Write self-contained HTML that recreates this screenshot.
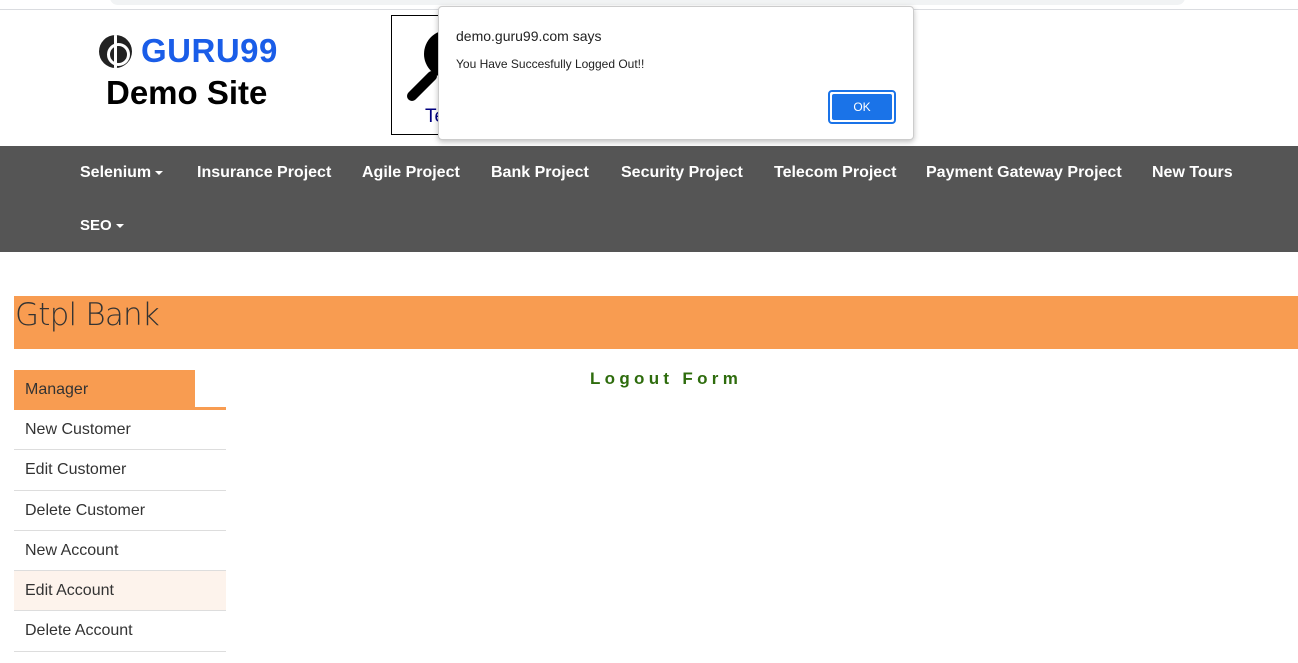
<!DOCTYPE html>
<html><head><meta charset="utf-8"><style>
*{margin:0;padding:0;box-sizing:border-box}
body{width:1298px;height:663px;overflow:hidden;background:#fff;font-family:"Liberation Sans",Arial,sans-serif;position:relative}
.topbar{position:absolute;left:0;top:0;width:1298px;height:10px;background:#fff;border-bottom:1px solid #dadce0}
.topbar .pill{position:absolute;left:110px;top:-10px;width:1075px;height:15px;background:#f1f3f4;border-radius:8px}
.logo{position:absolute;left:99px;top:32px}
.g99{font-size:33px;font-weight:bold;color:#1a5de8;position:absolute;left:42px;top:0;letter-spacing:0.5px;white-space:nowrap}
.gico{position:absolute;left:0;top:3px;width:33px;height:33px;border-radius:50%;background:#222;overflow:hidden}
.gico:before{content:"";position:absolute;left:15px;top:0;width:3px;height:33px;background:#fff}
.gico:after{content:"";position:absolute;left:8px;top:8px;width:17px;height:17px;border:3px solid #fff;border-radius:50%}
.demo{position:absolute;left:106px;top:74px;font-size:33px;font-weight:bold;color:#000}
.box{position:absolute;left:391px;top:15px;width:60px;height:120px;border:1px solid #000}
.box span{position:absolute;left:33px;top:90px;font-size:19px;color:#000080}
nav{position:absolute;left:0;top:146px;width:1298px;height:106px;background:#555}
nav a{position:absolute;color:#fff;font-weight:bold;font-size:16px;white-space:nowrap}
.caret{display:inline-block;width:0;height:0;border-left:4px solid transparent;border-right:4px solid transparent;border-top:4px solid #fff;vertical-align:middle;margin-left:4px}
.bank{position:absolute;left:14px;top:296px;width:1284px;height:53px;background:#f89c51;font-size:31px;color:#333;padding:1px 0 0 1px;font-family:"DejaVu Sans",sans-serif;font-weight:300;letter-spacing:-0.8px}
.menu{position:absolute;left:14px;top:370px;width:212px}
.mgr{height:37px;background:#f89c51;width:181px;font-size:16px;color:#333;padding:11px 11px 0}
.mgrline{height:3px;background:#f89c51;width:212px}
.item{height:40.3px;border-bottom:1px solid #ddd;font-size:16px;color:#333;padding:11px 11px}
.form{position:absolute;left:590px;top:369px;font-size:17px;font-weight:bold;color:#2e6c0d;letter-spacing:4.3px}
.dlg{position:absolute;left:438px;top:6px;width:476px;height:134px;background:#fff;border:1px solid #ccc;border-radius:4px;box-shadow:0 2px 6px rgba(0,0,0,.25);font-family:"Liberation Sans",sans-serif}
.dlg .t{position:absolute;left:17px;top:21px;font-size:14px;color:#222}
.dlg .m{position:absolute;left:17px;top:50px;font-size:12px;color:#222}
.ok{position:absolute;left:389px;top:83px;width:68px;height:34px;border:2px solid #1a73e8;border-radius:4px;padding:2px}
.ok div{width:100%;height:100%;background:#1a73e8;border-radius:2px;color:#fff;font-size:12px;text-align:center;line-height:26px}
</style></head><body>
<div class="topbar"><div class="pill"></div></div>
<div class="logo"><div class="gico"></div><div class="g99">GURU99</div></div>
<div class="demo">Demo Site</div>
<div class="box"><svg width="60" height="100" style="position:absolute;left:0;top:0"><circle cx="56" cy="38" r="24" fill="#000"/><line x1="40" y1="60" x2="20" y2="80" stroke="#000" stroke-width="10" stroke-linecap="round"/></svg><span>Te</span></div>
<nav>
<a style="left:80px;top:18px">Selenium<span class="caret"></span></a>
<a style="left:197px;top:18px">Insurance Project</a>
<a style="left:362px;top:18px">Agile Project</a>
<a style="left:491px;top:18px">Bank Project</a>
<a style="left:621px;top:18px">Security Project</a>
<a style="left:774px;top:18px">Telecom Project</a>
<a style="left:926px;top:18px">Payment Gateway Project</a>
<a style="left:1152px;top:18px">New Tours</a>
<a style="left:80px;top:71px;font-size:15px">SEO<span class="caret"></span></a>
</nav>
<div class="bank">Gtpl Bank</div>
<div class="menu">
<div class="mgr">Manager</div><div class="mgrline"></div>
<div class="item">New Customer</div>
<div class="item">Edit Customer</div>
<div class="item">Delete Customer</div>
<div class="item">New Account</div>
<div class="item" style="background:#fdf3ec">Edit Account</div>
<div class="item">Delete Account</div>
</div>
<div class="form">Logout Form</div>
<div class="dlg"><div class="t">demo.guru99.com says</div><div class="m">You Have Succesfully Logged Out!!</div><div class="ok"><div>OK</div></div></div>
</body></html>
